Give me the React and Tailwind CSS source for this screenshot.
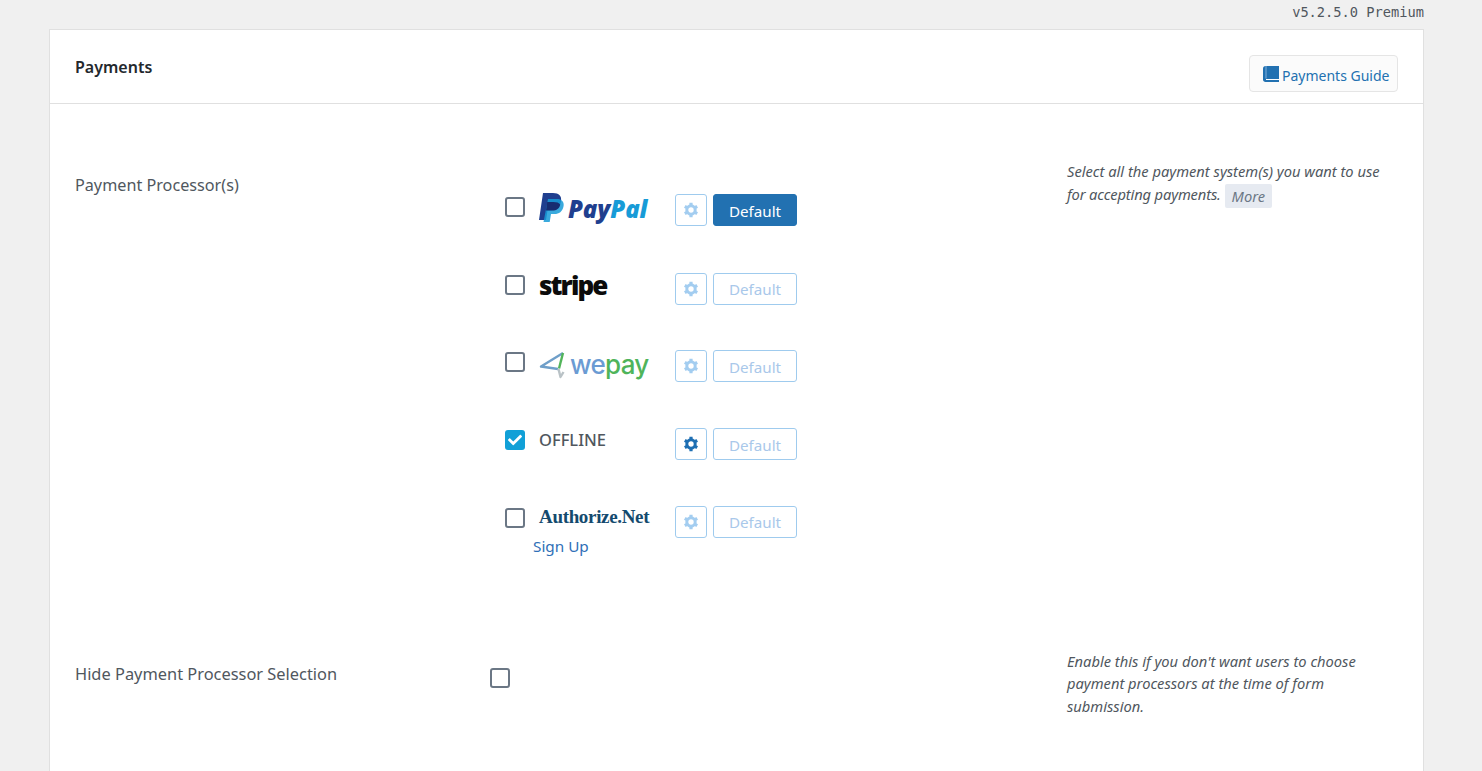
import React from "react";
import { FaCheck } from "react-icons/fa";

function Check({ checked }) {
  return checked ? (
    <span className="flex h-5 w-5 items-center justify-center rounded-[3px] bg-[#11a0d7] text-white">
      <FaCheck className="h-[14px] w-[14px]" />
    </span>
  ) : (
    <span className="block h-5 w-5 rounded-[3px] border-2 border-[#6b7785] bg-white" />
  );
}

function Gear({ className }) {
  return (
    <svg width="16" height="16" viewBox="0 0 16 16" fill="none" stroke="currentColor" className={className}>
      <circle cx="8" cy="8" r="4.200" strokeWidth="3" />
      <path d="M8 .8v3M8 12.200v3M1.800 4.400l2.600 1.500M11.600 10.100l2.600 1.500M1.800 11.600l2.600-1.500M11.600 5.900l2.600-1.500" strokeWidth="3.200" />
    </svg>
  );
}

function Book() {
  return (
    <svg width="16" height="16" viewBox="0 0 16 16" className="shrink-0">
      <path d="M2.500 0H16v16H2.500C1 16 0 15 0 13.500V2.500C0 1 1 0 2.500 0z" fill="#2271b1" />
      <path d="M3 0v12.500" stroke="#7fb0dc" strokeWidth="1" />
      <path d="M3 13.500h13" stroke="#ffffff" strokeWidth="1" />
    </svg>
  );
}

function PayPal() {
  return (
    <div className="flex items-center">
      <svg width="25" height="30" viewBox="0 0 25 30" className="mr-[4px] mt-[-1px] shrink-0">
        <path d="M4 0h10c6 0 9 3 8 8.500-1 6-5 9-10 9H8.500L7 27H0z" fill="#1f3f8f" />
        <path d="M9 6h8.500c5 0 8 2.500 7 7.500-1 5-4.500 7.500-9 7.500H12l-1.300 8H4.500z" fill="#179bd7" opacity="0.85" />
        <path d="M8.200 9h6c3.500 0 6 .8 7 2.500-.8 4-3.500 6-8 6H7z" fill="#172c70" />
      </svg>
      <span className="font-['Open_Sans',sans-serif] text-[24px] font-extrabold italic leading-none tracking-[-0.1px] text-[#1f3f8f]">
        Pay<span className="text-[#179bd7]">Pal</span>
      </span>
    </div>
  );
}

function Stripe() {
  return <span className="mt-[-1px] block font-['Open_Sans',sans-serif] text-[26px] font-extrabold leading-none tracking-[-1.900px] text-[#0b0b0b]">stripe</span>;
}

function WePay() {
  return (
    <div className="flex items-center">
      <svg width="27" height="28" viewBox="0 0 27 28" fill="none" className="mr-[4px] shrink-0">
        <path d="M24 2 2 15.500l17 2.500" stroke="#6f9fc9" strokeWidth="2.400" strokeLinejoin="round" />
        <path d="M24 2 20 17.500" stroke="#52b45a" strokeWidth="2.400" />
        <path d="M19.500 18l2 8 3-5" stroke="#b9c2c6" strokeWidth="2.400" strokeLinejoin="round" />
      </svg>
      <span className="font-['Inter',sans-serif] text-[26px] font-medium leading-none tracking-[-0.700px]">
        <span className="text-[#6b9bd3]">we</span>
        <span className="text-[#4fb45a]">pay</span>
      </span>
    </div>
  );
}

function Authorize() {
  return <span className="block whitespace-nowrap font-['Liberation_Serif',serif] text-[19px] font-bold leading-none tracking-[-0.330px] text-[#144a6e]">Authorize.Net</span>;
}

function Row({ rowClass, checkClass, logoClass, textClass, logo, checked, gearDark, primary }) {
  return (
    <div className={`flex items-start ${rowClass}`}>
      <div className={`w-[34px] shrink-0 ${checkClass}`}>
        <Check checked={checked} />
      </div>
      <div className={`w-[136px] shrink-0 ${logoClass}`}>{logo}</div>
      <div className="flex gap-[6px]">
        <span className="flex h-8 w-8 items-center justify-center rounded-[3px] border border-[#9fcbee] bg-white">
          <Gear className={gearDark ? "text-[#1e6fb3]" : "text-[#a3cdf0]"} />
        </span>
        <span
          className={`flex h-8 w-[84px] items-center justify-center rounded-[3px] border text-[15.200px] ${textClass} ${
            primary ? "border-[#2271b1] bg-[#2271b1] text-white" : "border-[#9fcbee] bg-white text-[#a9c8ea]"
          }`}
        >
          Default
        </span>
      </div>
    </div>
  );
}

export default function App() {
  return (
    <div className="h-screen overflow-hidden bg-[#f0f0f0] pl-[49px] pr-[58px] font-['Noto_Sans',sans-serif]">
      <div className="h-[29px] pt-[3px] text-right font-['DejaVu_Sans_Mono',monospace] text-[13.700px] leading-[18px] text-[#50575e]">
        v5.2.5.0 Premium
      </div>
      <div className="h-[800px] border border-[#e0e0e0] bg-white">
        <div className="flex h-[74px] items-start justify-between border-b border-[#e0e0e0] pl-[25px] pr-[25px]">
          <h2 className="mt-[26px] text-[16px] font-semibold leading-[22px] text-[#23282d]">Payments</h2>
          <a className="mt-[25px] flex h-[37px] w-[149px] items-center gap-[3px] rounded-[4px] border border-[#e5e5e5] bg-[#fbfbfb] pl-[13px] text-sm text-[#2271b1]">
            <Book />
            <span className="pt-[5px]">Payments Guide</span>
          </a>
        </div>

        <div className="flex h-[547px] pl-[25px] pr-[25px] pt-[56px]">
          <div className="w-[415px] shrink-0 pt-[14px] text-[16.200px] leading-[22px] text-[#50575e]">Payment Processor(s)</div>
          <div className="w-[577px] shrink-0 pl-[15px] pt-[34px] text-[#50575e]">
            <Row rowClass="h-[79px]" checkClass="pt-[3px]" logoClass="" textClass="pt-[2px]" logo={<PayPal />} primary />
            <Row rowClass="h-[77px]" checkClass="pt-[2px]" logoClass="" textClass="pt-[1px]" logo={<Stripe />} />
            <Row rowClass="h-[78px]" checkClass="pt-[2px]" logoClass="pt-[1px]" textClass="pt-[2px]" logo={<WePay />} />
            <Row
              rowClass="h-[78px]"
              checkClass="pt-[2px]"
              logoClass="pt-[1px] text-[16.500px] font-medium leading-[22px] text-[#50575e]"
              textClass="pt-[2px]"
              logo="OFFLINE"
              checked
              gearDark
            />
            <div>
              <Row rowClass="h-[62px]" checkClass="pt-[2px]" logoClass="pt-[1px]" textClass="pt-[1px]" logo={<Authorize />} />
              <a className="ml-[28px] mt-[-32px] block text-[15.300px] leading-[20px] text-[#2f6fb7]">Sign Up</a>
            </div>
          </div>
          <div className="w-[331px] shrink-0 pr-[10px] text-[14.700px] italic leading-[23px] text-[#50575e]">
            Select all the payment system(s) you want to use <span className="tracking-[-0.140px]">for accepting payments.</span>{" "}
            <span className="relative top-[2px] rounded-[2px] bg-[#e6eaf1] px-[7px] py-[2px] text-[#6b7785]">More</span>
          </div>
        </div>

        <div className="flex pl-[25px] pr-[25px]">
          <div className="w-[415px] shrink-0 pt-[12px] text-[16.400px] leading-[22px] text-[#50575e]">Hide Payment Processor Selection</div>
          <div className="w-[577px] shrink-0 pt-[17px]">
            <Check />
          </div>
          <div className="mt-[-1px] w-[331px] shrink-0 pr-[10px] text-[14.700px] italic leading-[22.400px] text-[#50575e]">
            Enable this if you don't want users to choose payment processors at the time of form submission.
          </div>
        </div>
      </div>
    </div>
  );
}
